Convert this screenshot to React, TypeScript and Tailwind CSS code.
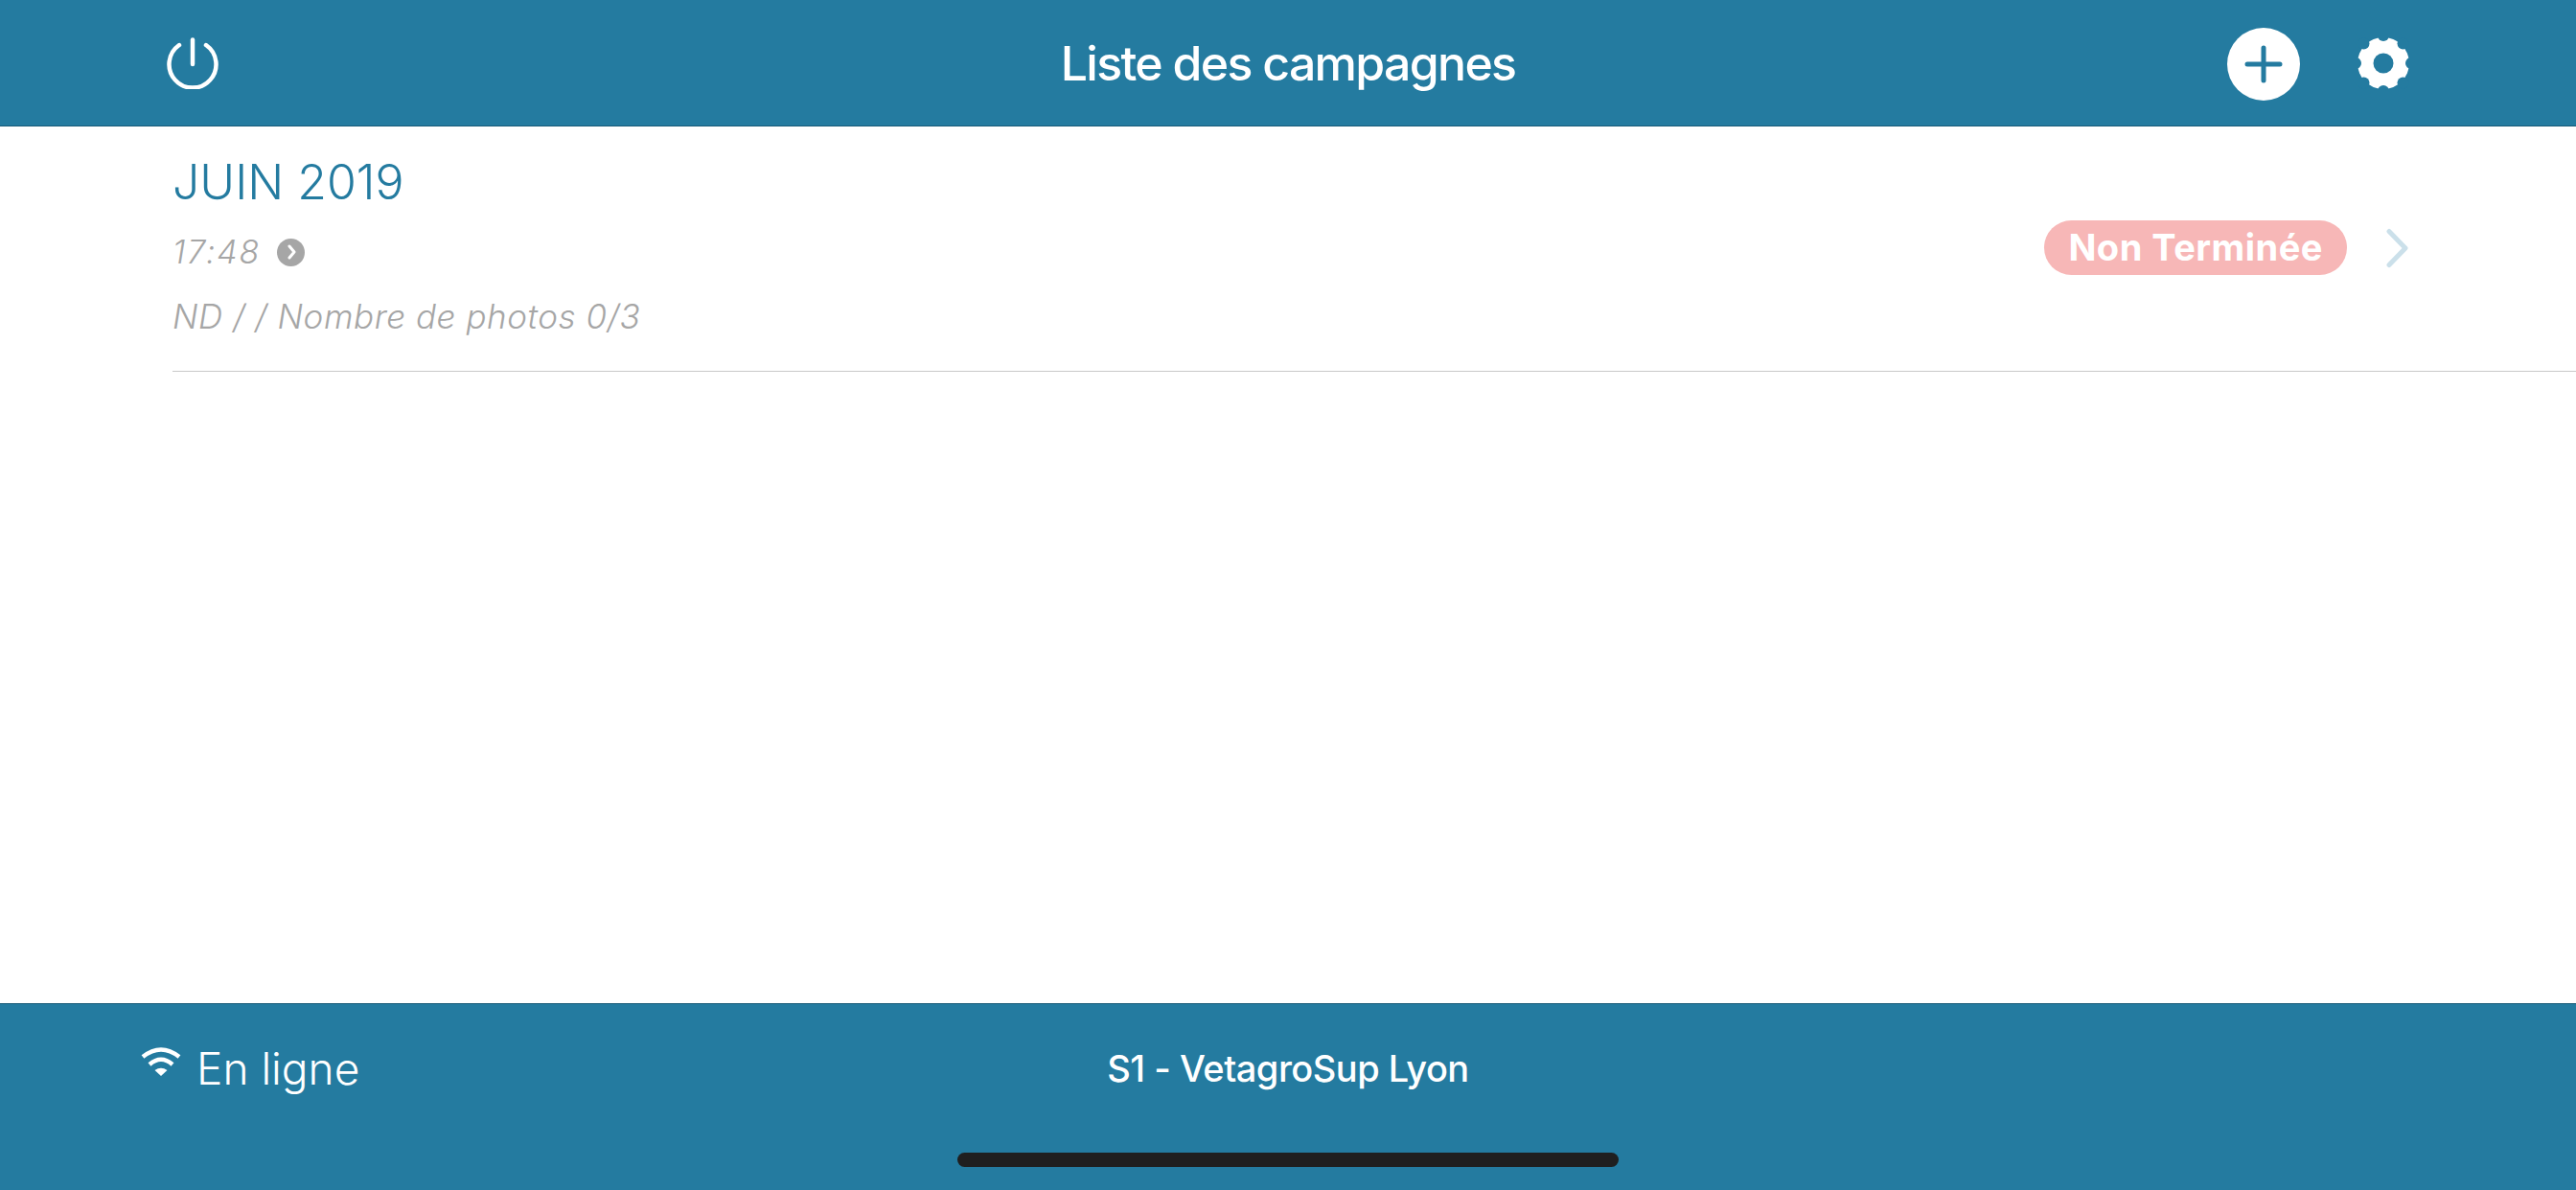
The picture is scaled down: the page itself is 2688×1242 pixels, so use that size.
import React from 'react';

const font = { fontFamily: 'Inter, "Liberation Sans", sans-serif' };

const PowerIcon = () => (
    <svg width="54" height="54" viewBox="0 0 54 54" fill="none" stroke="white" strokeWidth="4.5" strokeLinecap="round">
        <path d="M13 8 A24.5 24.5 0 1 0 41 8" />
        <path d="M27 2.5 V28" />
    </svg>
);

const GearIcon = () => {
    const bites = [0, 45, 90, 135, 180, 225, 270, 315];
    return (
        <svg width="54" height="56" viewBox="0 0 54 56">
            <circle cx="27" cy="28" r="27" fill="white" />
            {bites.map((a) => (
                <circle
                    key={a}
                    cx={27 + 29 * Math.cos((a * Math.PI) / 180)}
                    cy={28 + 29 * Math.sin((a * Math.PI) / 180)}
                    r="6"
                    fill="#247ba0"
                />
            ))}
            <circle cx="27" cy="28" r="10.5" fill="#247ba0" />
        </svg>
    );
};

const WifiIcon = () => (
    <svg width="42" height="30" viewBox="0 0 42 30" fill="none" stroke="white" strokeWidth="4.5">
        <path d="M2 10 Q21 -5 40 10" />
        <path d="M9 18 Q21 7.5 33 18" />
        <path d="M14.5 24 Q21 19.5 27.5 24 L21 30 Z" fill="white" stroke="none" />
    </svg>
);

const App: React.FC = () => {
    return (
        <div className="flex h-screen w-full flex-col bg-white" style={font}>
            <header className="grid h-[132px] grid-cols-[1fr_auto_1fr] items-center border-b border-[#175a78] bg-[#247ba0] px-[174px]">
                <div className="flex">
                    <PowerIcon />
                </div>
                <h1 className="pt-[2px] text-[50px] font-[550] tracking-[-1.7px] text-white">Liste des campagnes</h1>
                <div className="flex items-center justify-end gap-[60px]">
                    <div className="mt-[3px] flex h-[76px] w-[76px] items-center justify-center rounded-full bg-white">
                        <svg width="40" height="40" viewBox="0 0 40 40" stroke="#247ba0" strokeWidth="5" strokeLinecap="round">
                            <path d="M20 3 V37 M3 20 H37" />
                        </svg>
                    </div>
                    <GearIcon />
                </div>
            </header>

            <main className="flex-1">
                <div className="ml-[180px] flex h-[256px] items-center justify-between border-b border-[#c8c8c8] pr-[175px]">
                    <div className="flex flex-col self-start pt-[28px]">
                        <div className="text-[50px] leading-[60px] font-light text-[#247ba0]">JUIN 2019</div>
                        <div className="mt-[21px] flex items-center gap-[17px] text-[34px] leading-[44px] font-[350] tracking-[1.8px] text-[#a6a6a6] italic">
                            <span>17:48</span>
                            <span className="flex h-[29px] w-[29px] items-center justify-center rounded-full bg-[#a6a6a6]">
                                <svg width="14" height="16" viewBox="0 0 14 16" fill="none" stroke="white" strokeWidth="3" strokeLinecap="round" strokeLinejoin="round">
                                    <path d="M5 2 L10 8 L5 14" />
                                </svg>
                            </span>
                        </div>
                        <div className="mt-[23px] text-[35px] leading-[44px] font-[350] tracking-[0.55px] text-[#a6a6a6] italic">ND / / Nombre de photos 0/3</div>
                    </div>
                    <div className="flex items-center gap-[40px] pb-[2px]">
                        <span className="flex h-[57px] items-center rounded-full bg-[#f7b7b7] px-[25px] text-[38px] font-bold tracking-[0.5px] text-white">Non Terminée</span>
                        <svg width="24" height="42" viewBox="0 0 24 42" fill="none" stroke="#cbe0ea" strokeWidth="5" strokeLinecap="round" strokeLinejoin="round">
                            <path d="M4 3.5 L21 21 L4 38.5" />
                        </svg>
                    </div>
                </div>
            </main>

            <footer className="flex h-[195px] flex-col border-t border-[#175a78] bg-[#247ba0]">
                <div className="grid h-[155px] grid-cols-[1fr_auto_1fr] items-center px-[147px] pb-[21px]">
                    <div className="flex items-center gap-[16px] text-white">
                        <span className="-mt-[14px]"><WifiIcon /></span>
                        <span className="text-[46px] font-light">En ligne</span>
                    </div>
                    <div className="text-[38px] font-medium tracking-[-0.5px] text-white">S1 - VetagroSup Lyon</div>
                    <div />
                </div>
                <div className="mx-auto h-[15px] w-[690px] rounded-full bg-[#1f1f1f]" />
            </footer>
        </div>
    );
};

export default App;
